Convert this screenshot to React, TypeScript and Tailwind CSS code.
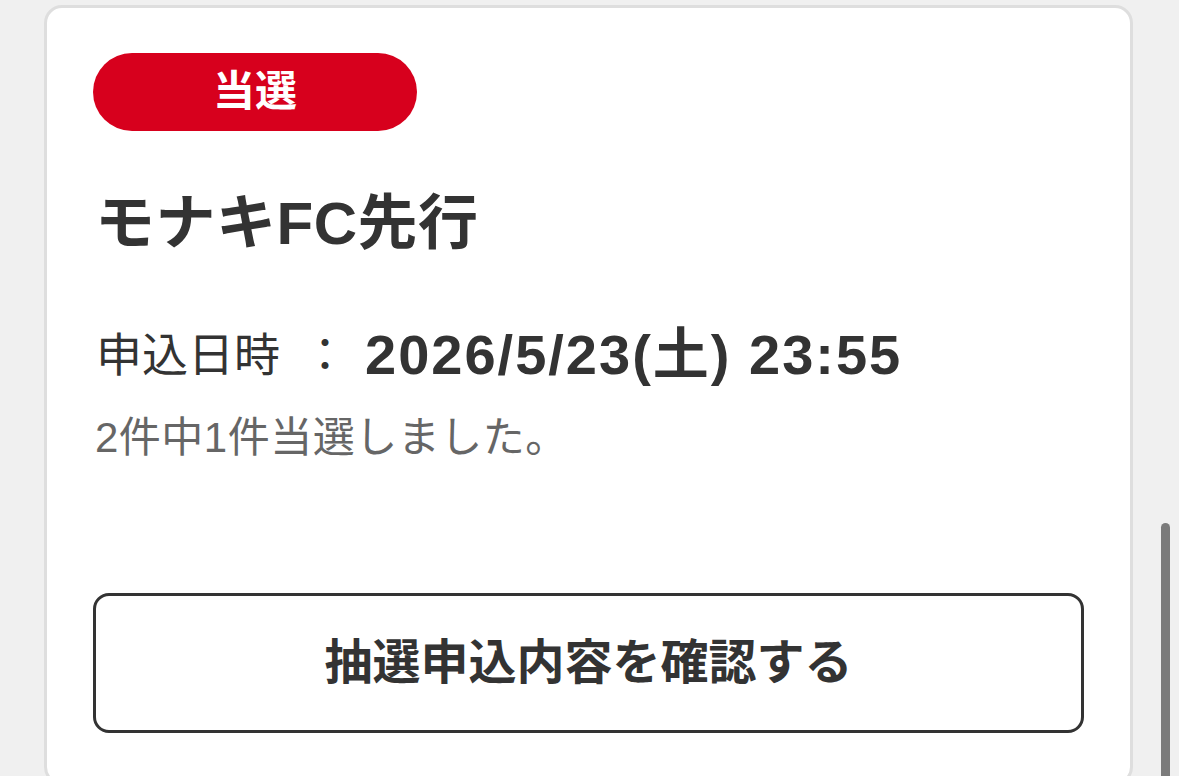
import React from 'react';

const App: React.FC = () => {
  return (
    <div className="relative h-[776px] w-full overflow-hidden bg-[#f0f0f0] font-['Liberation_Sans','Noto_Sans_CJK_JP',sans-serif] text-[#333333]">
      {/* Card */}
      <div className="ml-[44px] mt-[5px] h-[780px] w-[1089px] rounded-[18px] border-[3px] border-[#dedede] bg-white px-[46px] pt-[45px]">
        <div className="flex h-[78px] w-[324px] items-center justify-center rounded-full bg-[#d7001d]">
          <span className="text-[42px] font-bold leading-none text-white">当選</span>
        </div>

        <h2 className="mt-[63px] pl-[2px] text-[60px] font-bold leading-[60px] tracking-[0.5px]">モナキFC先行</h2>

        <div className="mt-[71px] flex h-[60px] items-center pl-[3px]">
          <span className="text-[46px] leading-none">申込日時</span>
          <span className="ml-[22px] text-[46px] leading-none">：</span>
          <span className="ml-[17px] text-[56px] font-bold leading-none tracking-[2px]">2026/5/23(土) 23:55</span>
        </div>

        <p className="mt-[29px] pl-[2px] text-[42px] leading-[48px] tracking-[0.5px] text-[#666666]">2件中1件当選しました。</p>

        <button className="mt-[131px] flex h-[140px] w-full items-center justify-center rounded-[16px] border-[3px] border-[#333333] bg-white">
          <span className="text-[48px] font-bold leading-none text-[#333333]">抽選申込内容を確認する</span>
        </button>
      </div>

      {/* Scroll indicator */}
      <div className="absolute left-[1161px] top-[523px] h-[280px] w-[9px] rounded-full bg-[#7b7b7b]" />
    </div>
  );
};

export default App;
